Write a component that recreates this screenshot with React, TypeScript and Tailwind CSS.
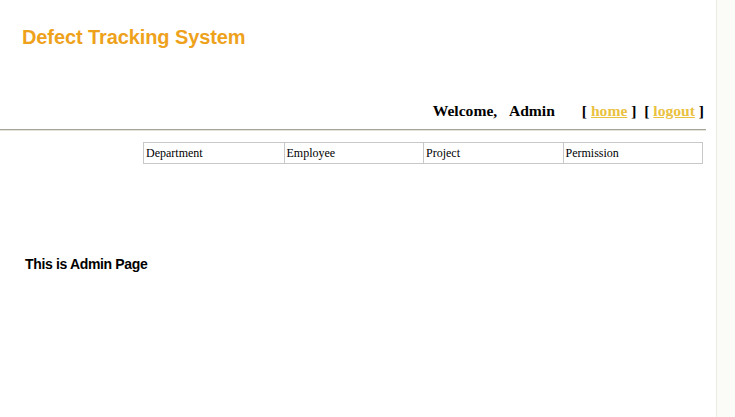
import React from "react";

export default function App() {
  const cells = ["Department", "Employee", "Project", "Permission"];
  return (
    <div className="flex w-[735px] h-[417px] bg-white overflow-hidden">
      <div className="w-[716px] h-full flex flex-col">
        <div className="pl-[22px] pt-[25px] h-[90px]">
          <h1 className="text-[20px] leading-[24px] font-bold text-[#eea21c] font-['Liberation_Sans',Arial,sans-serif] tracking-[-0.1px]">
            Defect Tracking System
          </h1>
        </div>
        <div className="flex justify-end pr-[12px] h-[39px] items-end pb-[9px] font-['Liberation_Serif','Times_New_Roman',serif] font-bold text-[15.6px] leading-[18px] text-black">
          <span>Welcome,&nbsp;&nbsp;&nbsp;Admin</span>
          <span className="ml-[27px]">
            [ <a href="#" className="text-[#e9c13f] underline">home</a> ]&nbsp;&nbsp;[ <a href="#" className="text-[#e9c13f] underline">logout</a> ]
          </span>
        </div>
        <div className="w-[706px] h-[2px] border-t border-t-[#a8a598] border-b border-b-[#e4e2dc]"></div>
        <div className="pl-[143px] pt-[11px]">
          <div className="flex w-[560px] h-[22px] border border-[#c8c8c8]">
            {cells.map((c, i) => (
              <div
                key={c}
                className={`w-[140px] h-full flex items-center pl-[2px] text-[12px] font-['Liberation_Serif','Times_New_Roman',serif] text-black ${i > 0 ? "border-l border-[#c8c8c8]" : ""}`}
              >
                {c}
              </div>
            ))}
          </div>
        </div>
        <div className="pl-[25px] pt-[92px]">
          <p className="text-[14px] leading-[16px] font-bold text-black font-['Liberation_Sans',Arial,sans-serif] tracking-[-0.35px]">
            This is Admin Page
          </p>
        </div>
      </div>
      <div className="w-[19px] h-full bg-[#fbfbf7] border-l border-[#ecece4]"></div>
    </div>
  );
}
